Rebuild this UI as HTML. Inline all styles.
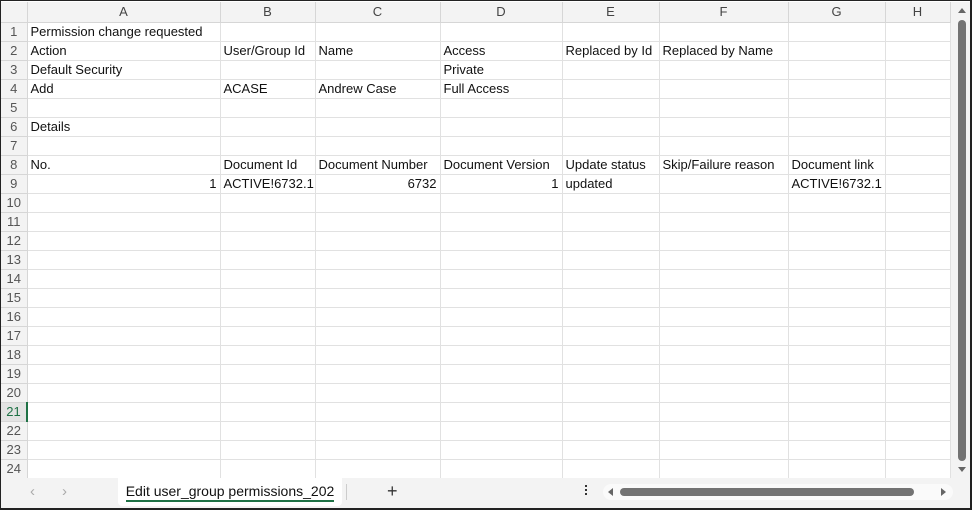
<!DOCTYPE html>
<html><head><style>
*{margin:0;padding:0;box-sizing:border-box}
body{width:972px;height:510px;overflow:hidden;background:#fff;font-family:"Liberation Sans",sans-serif;font-size:13px;color:#111;position:relative}
.frame{position:absolute;left:0;top:0;width:972px;height:510px;border:1px solid #222;border-width:1px 2px 2px 1px;pointer-events:none;z-index:10}
table{position:absolute;left:1px;top:2px;border-collapse:collapse;table-layout:fixed;width:949px}
td{height:19px;border-right:1px solid #e1e1e1;border-bottom:1px solid #e1e1e1;padding:0 3px;white-space:nowrap;overflow:hidden;line-height:18px}
tr.h td{background:#f3f3f3;color:#444;text-align:center;border-color:#d6d6d6;height:20px}
td.r{background:#f3f3f3;color:#555;text-align:center;border-color:#d6d6d6;padding:0}
.n{text-align:right}
.vs{position:absolute;left:951px;top:2px;width:19px;height:476px;background:#f3f3f3}
.vt{position:absolute;left:958px;top:20px;width:8px;height:441px;background:#737373;border-radius:4px}
.bb{position:absolute;left:1px;top:478px;width:969px;height:30px;background:#f3f3f3}
.tab{position:absolute;left:118px;top:478px;width:224px;height:28px;background:#fff;border-radius:0 0 4px 4px;font-size:14px;text-align:center;line-height:26px;color:#111}
.ul{position:absolute;left:126px;top:500px;width:208px;height:2px;background:#1e7145}
.hs{position:absolute;left:603px;top:484px;width:350px;height:16px;background:#fafafa;border-radius:8px}
.ht{position:absolute;left:620px;top:488px;width:294px;height:8px;background:#737373;border-radius:4px}
</style></head><body>
<table>
<colgroup><col style="width:26px"><col style="width:193px"><col style="width:95px"><col style="width:125px"><col style="width:122px"><col style="width:97px"><col style="width:129px"><col style="width:97px"><col style="width:65px"></colgroup>
<tr class="h"><td></td><td>A</td><td>B</td><td>C</td><td>D</td><td>E</td><td>F</td><td>G</td><td>H</td></tr>
<tr><td class="r">1</td><td style="overflow:visible">Permission change requested</td><td></td><td></td><td></td><td></td><td></td><td></td><td></td></tr>
<tr><td class="r">2</td><td>Action</td><td>User/Group Id</td><td>Name</td><td>Access</td><td>Replaced by Id</td><td>Replaced by Name</td><td></td><td></td></tr>
<tr><td class="r">3</td><td>Default Security</td><td></td><td></td><td>Private</td><td></td><td></td><td></td><td></td></tr>
<tr><td class="r">4</td><td>Add</td><td>ACASE</td><td>Andrew Case</td><td>Full Access</td><td></td><td></td><td></td><td></td></tr>
<tr><td class="r">5</td><td></td><td></td><td></td><td></td><td></td><td></td><td></td><td></td></tr>
<tr><td class="r">6</td><td>Details</td><td></td><td></td><td></td><td></td><td></td><td></td><td></td></tr>
<tr><td class="r">7</td><td></td><td></td><td></td><td></td><td></td><td></td><td></td><td></td></tr>
<tr><td class="r">8</td><td>No.</td><td>Document Id</td><td>Document Number</td><td>Document Version</td><td>Update status</td><td>Skip/Failure reason</td><td>Document link</td><td></td></tr>
<tr><td class="r">9</td><td class="n">1</td><td>ACTIVE!6732.1</td><td class="n">6732</td><td class="n">1</td><td>updated</td><td></td><td>ACTIVE!6732.1</td><td></td></tr>
<tr><td class="r">10</td><td></td><td></td><td></td><td></td><td></td><td></td><td></td><td></td></tr>
<tr><td class="r">11</td><td></td><td></td><td></td><td></td><td></td><td></td><td></td><td></td></tr>
<tr><td class="r">12</td><td></td><td></td><td></td><td></td><td></td><td></td><td></td><td></td></tr>
<tr><td class="r">13</td><td></td><td></td><td></td><td></td><td></td><td></td><td></td><td></td></tr>
<tr><td class="r">14</td><td></td><td></td><td></td><td></td><td></td><td></td><td></td><td></td></tr>
<tr><td class="r">15</td><td></td><td></td><td></td><td></td><td></td><td></td><td></td><td></td></tr>
<tr><td class="r">16</td><td></td><td></td><td></td><td></td><td></td><td></td><td></td><td></td></tr>
<tr><td class="r">17</td><td></td><td></td><td></td><td></td><td></td><td></td><td></td><td></td></tr>
<tr><td class="r">18</td><td></td><td></td><td></td><td></td><td></td><td></td><td></td><td></td></tr>
<tr><td class="r">19</td><td></td><td></td><td></td><td></td><td></td><td></td><td></td><td></td></tr>
<tr><td class="r">20</td><td></td><td></td><td></td><td></td><td></td><td></td><td></td><td></td></tr>
<tr><td class="r" style="background:#e3e3e3;color:#1e7145;border-right:2px solid #1e7145">21</td><td></td><td></td><td></td><td></td><td></td><td></td><td></td><td></td></tr>
<tr><td class="r">22</td><td></td><td></td><td></td><td></td><td></td><td></td><td></td><td></td></tr>
<tr><td class="r">23</td><td></td><td></td><td></td><td></td><td></td><td></td><td></td><td></td></tr>
<tr><td class="r">24</td><td></td><td></td><td></td><td></td><td></td><td></td><td></td><td></td></tr>
</table>
<div class="vs"></div>
<div style="position:absolute;left:958px;top:8px;width:0;height:0;border-left:4px solid transparent;border-right:4px solid transparent;border-bottom:5px solid #666"></div>
<div class="vt"></div>
<div style="position:absolute;left:958px;top:467px;width:0;height:0;border-left:4px solid transparent;border-right:4px solid transparent;border-top:5px solid #666"></div>
<div class="bb"></div>
<div style="position:absolute;left:30px;top:483px;color:#aaa;font-size:15px">&#8249;</div>
<div style="position:absolute;left:62px;top:483px;color:#aaa;font-size:15px">&#8250;</div>
<div class="tab">Edit user_group permissions_202</div>
<div class="ul"></div>
<div style="position:absolute;left:346px;top:484px;width:1px;height:16px;background:#ccc"></div>
<div style="position:absolute;left:387px;top:481px;font-size:18px;color:#333">+</div>
<div style="position:absolute;left:585px;top:485px;width:2px;height:2px;background:#333;box-shadow:0 4px #333,0 8px #333"></div>
<div class="hs"></div>
<div style="position:absolute;left:608px;top:488px;width:0;height:0;border-top:4px solid transparent;border-bottom:4px solid transparent;border-right:5px solid #666"></div>
<div class="ht"></div>
<div style="position:absolute;left:941px;top:488px;width:0;height:0;border-top:4px solid transparent;border-bottom:4px solid transparent;border-left:5px solid #666"></div>
<div class="frame"></div>
</body></html>
